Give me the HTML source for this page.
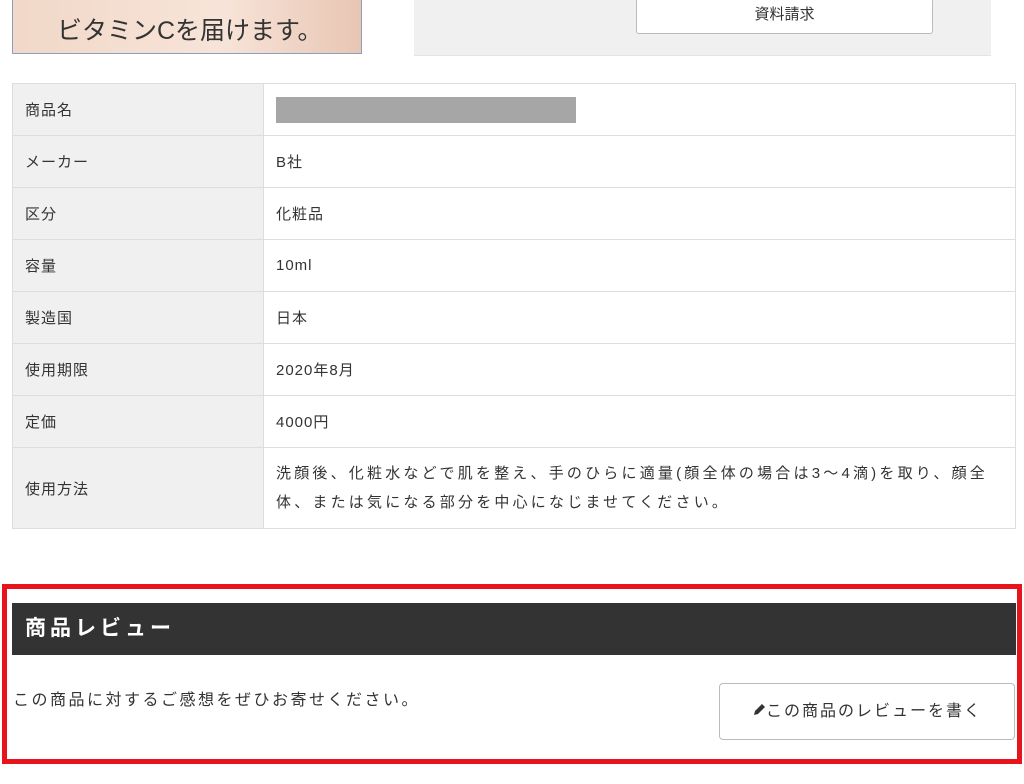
<!DOCTYPE html>
<html><head><meta charset="utf-8"><style>
body{margin:0;width:1024px;height:784px;position:relative;background:#fff;font-family:"Liberation Sans","Noto Sans CJK JP",sans-serif;color:#333;overflow:hidden}
.abs{position:absolute}
table{border-collapse:collapse;position:absolute;left:12px;top:83px;width:1004px;font-size:15px;letter-spacing:1px}
td{border:1px solid #ddd;padding:0 12px;height:51px}
td.l{background:#f0f0f0;width:226px}
</style></head><body>
<div class="abs" style="left:12px;top:-2px;width:348px;height:54px;border:1px solid #8aa0c0;background:linear-gradient(90deg,#f1d8c8,#f7e4d8 60%,#e8c6b4);"><div style="position:absolute;left:44px;top:12px;font-size:25px;color:#333">ビタミンCを届けます。</div></div>
<div class="abs" style="left:414px;top:0;width:577px;height:55px;background:#f0f0f0;border-bottom:1px solid #e4e4e4"></div>
<div class="abs" style="left:636px;top:-2px;width:295px;height:34px;background:#fff;border:1px solid #bbb;border-radius:3px;text-align:center;line-height:32px;font-size:15px">資料請求</div>
<table>
<tr><td class="l">商品名</td><td><div style="width:300px;height:26px;background:#a6a6a6"></div></td></tr>
<tr><td class="l">メーカー</td><td>B社</td></tr>
<tr><td class="l">区分</td><td>化粧品</td></tr>
<tr><td class="l">容量</td><td>10ml</td></tr>
<tr><td class="l">製造国</td><td>日本</td></tr>
<tr><td class="l">使用期限</td><td>2020年8月</td></tr>
<tr><td class="l">定価</td><td>4000円</td></tr>
<tr><td class="l" style="height:80px">使用方法</td><td style="line-height:29px;letter-spacing:3.2px;white-space:nowrap">洗顔後、化粧水などで肌を整え、手のひらに適量(顔全体の場合は3〜4滴)を取り、顔全<br>体、または気になる部分を中心になじませてください。</td></tr>
</table>
<div class="abs" style="left:2px;top:584px;width:1010px;height:170px;border:5px solid #e8141c"></div>
<div class="abs" style="left:12px;top:603px;width:1004px;height:52px;background:#333;color:#fff;font-weight:bold;font-size:21px;letter-spacing:4px;line-height:52px;padding-left:13px;box-sizing:border-box">商品レビュー</div>
<div class="abs" style="left:13px;top:686px;font-size:16px;letter-spacing:2.5px">この商品に対するご感想をぜひお寄せください。</div>
<div class="abs" style="left:719px;top:683px;width:296px;height:57px;border:1px solid #bbb;border-radius:4px;background:#fff;text-align:center;line-height:56px;font-size:16px;letter-spacing:2px;box-sizing:border-box"><svg width="14" height="14" viewBox="0 0 14 14" style="vertical-align:-1px"><path d="M2 12l1-4 7-7 3 3-7 7z" fill="#333"/></svg>この商品のレビューを書く</div>
</body></html>
